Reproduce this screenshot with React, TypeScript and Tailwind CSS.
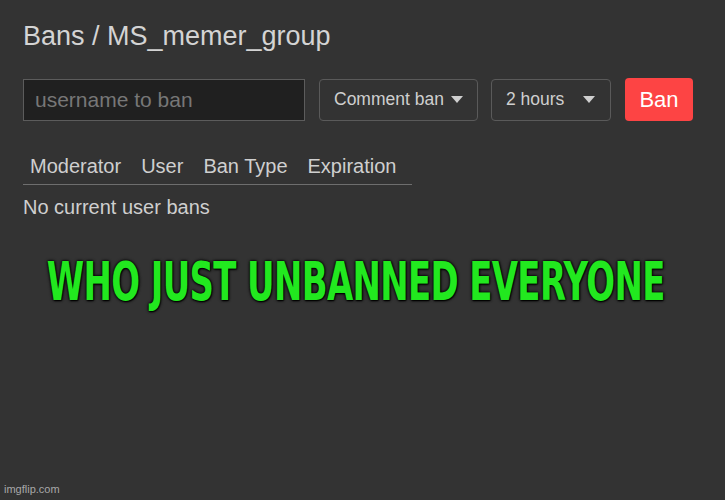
import React from "react";

function Caret() {
  return (
    <svg width="12" height="8" viewBox="0 0 12 8">
      <path d="M0 0 L12 0 L6 7 Z" fill="#cfcfcf" />
    </svg>
  );
}

export default function App() {
  return (
    <div
      className="relative w-[725px] h-[500px] bg-[#333333] overflow-hidden text-[#d0d0d0]"
      style={{ fontFamily: '"Liberation Sans", Arial, sans-serif' }}
    >
      <div className="pl-[23px] pt-[21px]">
        <div className="text-[27px] leading-[30px] text-[#d4d4d4]">Bans / MS_memer_group</div>
        <div className="flex items-center mt-[27px] h-[43px]">
          <div className="w-[282px] h-[42px] bg-[#202020] border border-[#5c5c5c] flex items-center pl-[11px]">
            <span className="text-[21px] text-[#777777]">username to ban</span>
          </div>
          <div className="ml-[14px] w-[159px] h-[42px] border border-[#5a5a5a] rounded-[4px] flex items-center pl-[14px] gap-[7px]">
            <span className="text-[17.5px] text-[#cfcfcf]">Comment ban</span>
            <Caret />
          </div>
          <div className="ml-[13px] w-[120px] h-[42px] border border-[#5a5a5a] rounded-[4px] flex items-center pl-[14px] gap-[19px]">
            <span className="text-[17.5px] text-[#cfcfcf]">2 hours</span>
            <Caret />
          </div>
          <div className="ml-[14px] w-[68px] h-[43px] bg-[#fd4444] rounded-[4px] flex items-center justify-center">
            <span className="text-[22px] text-white">Ban</span>
          </div>
        </div>
        <div className="w-[389px] mt-[33px] border-b border-[#6e6e6e] flex pl-[7px] gap-[20px] text-[20px] leading-[24px] text-[#cfcfcf] pb-[6px]">
          <span>Moderator</span>
          <span>User</span>
          <span>Ban Type</span>
          <span>Expiration</span>
        </div>
        <div className="text-[20px] leading-[24px] mt-[10px] text-[#cfcfcf]">No current user bans</div>
      </div>
      <div className="absolute left-0 right-0 top-[252px] flex justify-center pr-[14px]">
        <span
          className="text-[53px] leading-[60px] font-black text-[#22e81f] tracking-[-1px] scale-x-[0.64] whitespace-nowrap"
          style={{ fontFamily: '"DejaVu Sans", sans-serif', textShadow: "0 0 4px #000, 0 0 3px #000, 1px 1px 2px #000" }}
        >
          WHO JUST UNBANNED EVERYONE
        </span>
      </div>
      <div className="absolute left-[4px] bottom-[3px] text-[11px] text-[#a8a8a8]">imgflip.com</div>
    </div>
  );
}
